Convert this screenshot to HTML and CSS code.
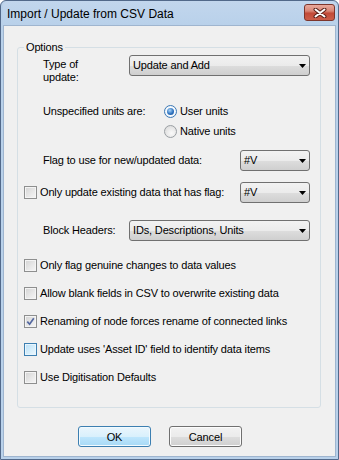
FILE: index.html
```html
<!DOCTYPE html>
<html>
<head>
<meta charset="utf-8">
<link rel="stylesheet" href="styles.css">
</head>
<body>
<div class="window">
  <div class="titlebar">
    <span class="title">Import / Update from CSV Data</span>
    <div class="close">
      <svg width="14" height="10" viewBox="0 0 14 10">
        <path d="M2.5,1.5 L11.5,8.5 M11.5,1.5 L2.5,8.5" stroke="#5a2119" stroke-width="4" stroke-linecap="round"/>
        <path d="M2.5,1.5 L11.5,8.5 M11.5,1.5 L2.5,8.5" stroke="#ffffff" stroke-width="2" stroke-linecap="round"/>
      </svg>
    </div>
  </div>
  <div class="client">
    <fieldset class="group">
      <legend>Options</legend>

      <div class="row row-type">
        <div class="label label-type">Type of update:</div>
        <div class="combo combo-wide"><span>Update and Add</span><svg class="arrow" width="7" height="4" viewBox="0 0 7 4"><polygon points="0,0 7,0 3.5,4" fill="#000"/></svg></div>
      </div>

      <div class="row row-units">
        <div class="label label-units">Unspecified units are:</div>
        <div class="radios">
          <div class="radio-item"><span class="radio on"><span class="dot"></span></span><span>User units</span></div>
          <div class="radio-item"><span class="radio"></span><span>Native units</span></div>
        </div>
      </div>

      <div class="row row-flag">
        <div class="label">Flag to use for new/updated data:</div>
        <div class="combo combo-small"><span>#V</span><svg class="arrow" width="7" height="4" viewBox="0 0 7 4"><polygon points="0,0 7,0 3.5,4" fill="#000"/></svg></div>
      </div>

      <div class="row row-only">
        <span class="check"></span>
        <span class="check-text">Only update existing data that has flag:</span>
        <div class="combo combo-small"><span>#V</span><svg class="arrow" width="7" height="4" viewBox="0 0 7 4"><polygon points="0,0 7,0 3.5,4" fill="#000"/></svg></div>
      </div>

      <div class="row row-block">
        <div class="label label-block">Block Headers:</div>
        <div class="combo combo-wide"><span>IDs, Descriptions, Units</span><svg class="arrow" width="7" height="4" viewBox="0 0 7 4"><polygon points="0,0 7,0 3.5,4" fill="#000"/></svg></div>
      </div>

      <div class="checks">
        <div class="check-row"><span class="check"></span><span class="check-text">Only flag genuine changes to data values</span></div>
        <div class="check-row"><span class="check"></span><span class="check-text">Allow blank fields in CSV to overwrite existing data</span></div>
        <div class="check-row"><span class="check"><svg width="9" height="9" viewBox="0 0 9 9"><path d="M1.3,4.6 L3.6,7.2 L7.8,1.2" fill="none" stroke="#5468a0" stroke-width="1.7"/></svg></span><span class="check-text">Renaming of node forces rename of connected links</span></div>
        <div class="check-row"><span class="check hot"></span><span class="check-text">Update uses 'Asset ID' field to identify data items</span></div>
        <div class="check-row"><span class="check"></span><span class="check-text">Use Digitisation Defaults</span></div>
      </div>
    </fieldset>

    <div class="buttons">
      <button class="btn btn-default">OK</button>
      <button class="btn">Cancel</button>
    </div>
  </div>
</div>
</body>
</html>
```

FILE: styles.css
```css
html, body {
  margin: 0;
  padding: 0;
  background: #ffffff;
}
body {
  font-family: "Liberation Sans", Arial, sans-serif;
  font-size: 11px;
  line-height: 13px;
  letter-spacing: -0.15px;
  color: #000;
}
.window {
  width: 339px;
  height: 460px;
  box-sizing: border-box;
  border: 1px solid #52698a;
  border-radius: 6px 6px 0 0;
  background: #b9d1ea;
  padding: 0 2px 2px 2px;
  display: flex;
  flex-direction: column;
}
.titlebar {
  height: 24px;
  flex: 0 0 24px;
  display: flex;
  justify-content: space-between;
  padding-left: 4px;
  background: linear-gradient(#c2d6ed, #b9d1ea);
  border-radius: 5px 5px 0 0;
}
.title {
  font-size: 12px;
  line-height: 15px;
  letter-spacing: 0;
  margin-top: 6px;
  color: #000;
}
.close {
  width: 29px;
  height: 15px;
  margin-top: 3px;
  margin-right: 1px;
  border: 1px solid #7d352b;
  border-radius: 3px;
  background: linear-gradient(#e9a99c 0%, #d98676 40%, #c24a38 55%, #cc5e4a 100%);
  display: flex;
  align-items: center;
  justify-content: center;
}
.client {
  flex: 1;
  background: #f0f0f0;
  border: 1px solid #9fb5cf;
  display: flex;
  flex-direction: column;
}
.group {
  width: 304px;
  box-sizing: border-box;
  margin: 15px 0 0 13px;
  border: 1px solid #d5dfe5;
  border-radius: 3px;
  padding: 0 10px 20px 6px;
  min-width: 0;
}
.group legend {
  padding: 0 2px;
  margin-left: 0;
  line-height: 13px;
}
.row {
  display: flex;
}
.label {
  white-space: nowrap;
}
.row-type {
  margin-top: 1px;
  align-items: flex-start;
  padding-left: 19px;
}
.label-type {
  white-space: normal;
  width: 55px;
  margin-right: 31px;
  margin-top: 3px;
}
.row-units {
  margin-top: 17px;
  padding-left: 19px;
  align-items: flex-start;
}
.label-units {
  width: 121px;
  height: 20px;
  display: flex;
  align-items: center;
}
.radios {
  display: flex;
  flex-direction: column;
}
.radio-item {
  height: 20px;
  display: flex;
  align-items: center;
  gap: 3px;
}
.radio {
  width: 13px;
  height: 13px;
  box-sizing: border-box;
  border-radius: 50%;
  border: 1px solid #9a9fa3;
  background: radial-gradient(circle at 60% 65%, #fafafa 0%, #e8e8e8 50%, #d6d6d6 100%);
  display: flex;
  align-items: center;
  justify-content: center;
}
.radio.on {
  border-color: #3c78b4;
  background: radial-gradient(circle, #ffffff 40%, #dce9f5 100%);
}
.dot {
  width: 7px;
  height: 7px;
  border-radius: 50%;
  background: radial-gradient(circle at 40% 35%, #a9d4f7 0%, #2f73c0 55%, #1a4d8e 100%);
}
.row-flag {
  margin-top: 9px;
  padding-left: 19px;
  align-items: center;
}
.row-only {
  margin-top: 11px;
  align-items: center;
}
.row-block {
  margin-top: 17px;
  padding-left: 19px;
  align-items: center;
}
.label-block {
  width: 86px;
}
.combo {
  height: 21px;
  box-sizing: border-box;
  border: 1px solid #707070;
  border-radius: 3px;
  background: linear-gradient(#f2f2f2 0%, #ebebeb 50%, #dddddd 51%, #cfcfcf 100%);
  display: flex;
  align-items: center;
  justify-content: space-between;
  padding: 0 3px 0 3px;
}
.combo-wide {
  flex: 1;
}
.combo-small {
  width: 70px;
  margin-left: auto;
}
.arrow {
  flex: 0 0 7px;
  margin-top: 1px;
}
.check {
  width: 13px;
  height: 13px;
  flex: 0 0 13px;
  box-sizing: border-box;
  border: 1px solid #8e8f8f;
  background: linear-gradient(135deg, #d3d3d3 0%, #e9e9e9 60%, #f6f6f6 100%);
  box-shadow: inset 0 0 0 1px #f4f4f4;
  display: flex;
  align-items: center;
  justify-content: center;
}
.check.hot {
  border-color: #3c7fb1;
  background: linear-gradient(135deg, #b9dff7 0%, #d8effb 60%, #eef8fd 100%);
  box-shadow: inset 0 0 0 1px #e8f5fd;
}
.check-text {
  margin-left: 3px;
  white-space: nowrap;
}
.checks {
  margin-top: 14px;
  display: flex;
  flex-direction: column;
  gap: 8px;
}
.check-row {
  height: 20px;
  display: flex;
  align-items: center;
}
.buttons {
  display: flex;
  gap: 18px;
  margin-top: 18px;
  padding-left: 74px;
}
.btn {
  width: 73px;
  height: 21px;
  box-sizing: border-box;
  border: 1px solid #707070;
  border-radius: 3px;
  background: linear-gradient(#f2f2f2 0%, #ebebeb 50%, #dddddd 51%, #cfcfcf 100%);
  font-family: "Liberation Sans", Arial, sans-serif;
  font-size: 11px;
  letter-spacing: -0.15px;
  color: #000;
  padding: 0;
  margin: 0;
  box-shadow: inset 0 0 0 1px #fcfcfc;
}
.btn-default {
  border-color: #3c7fb1;
  background: linear-gradient(#eaf6fd 0%, #d9f0fc 50%, #bee6fd 51%, #a7d9f5 100%);
  box-shadow: inset 0 0 0 1px #f2fafe;
}
```
